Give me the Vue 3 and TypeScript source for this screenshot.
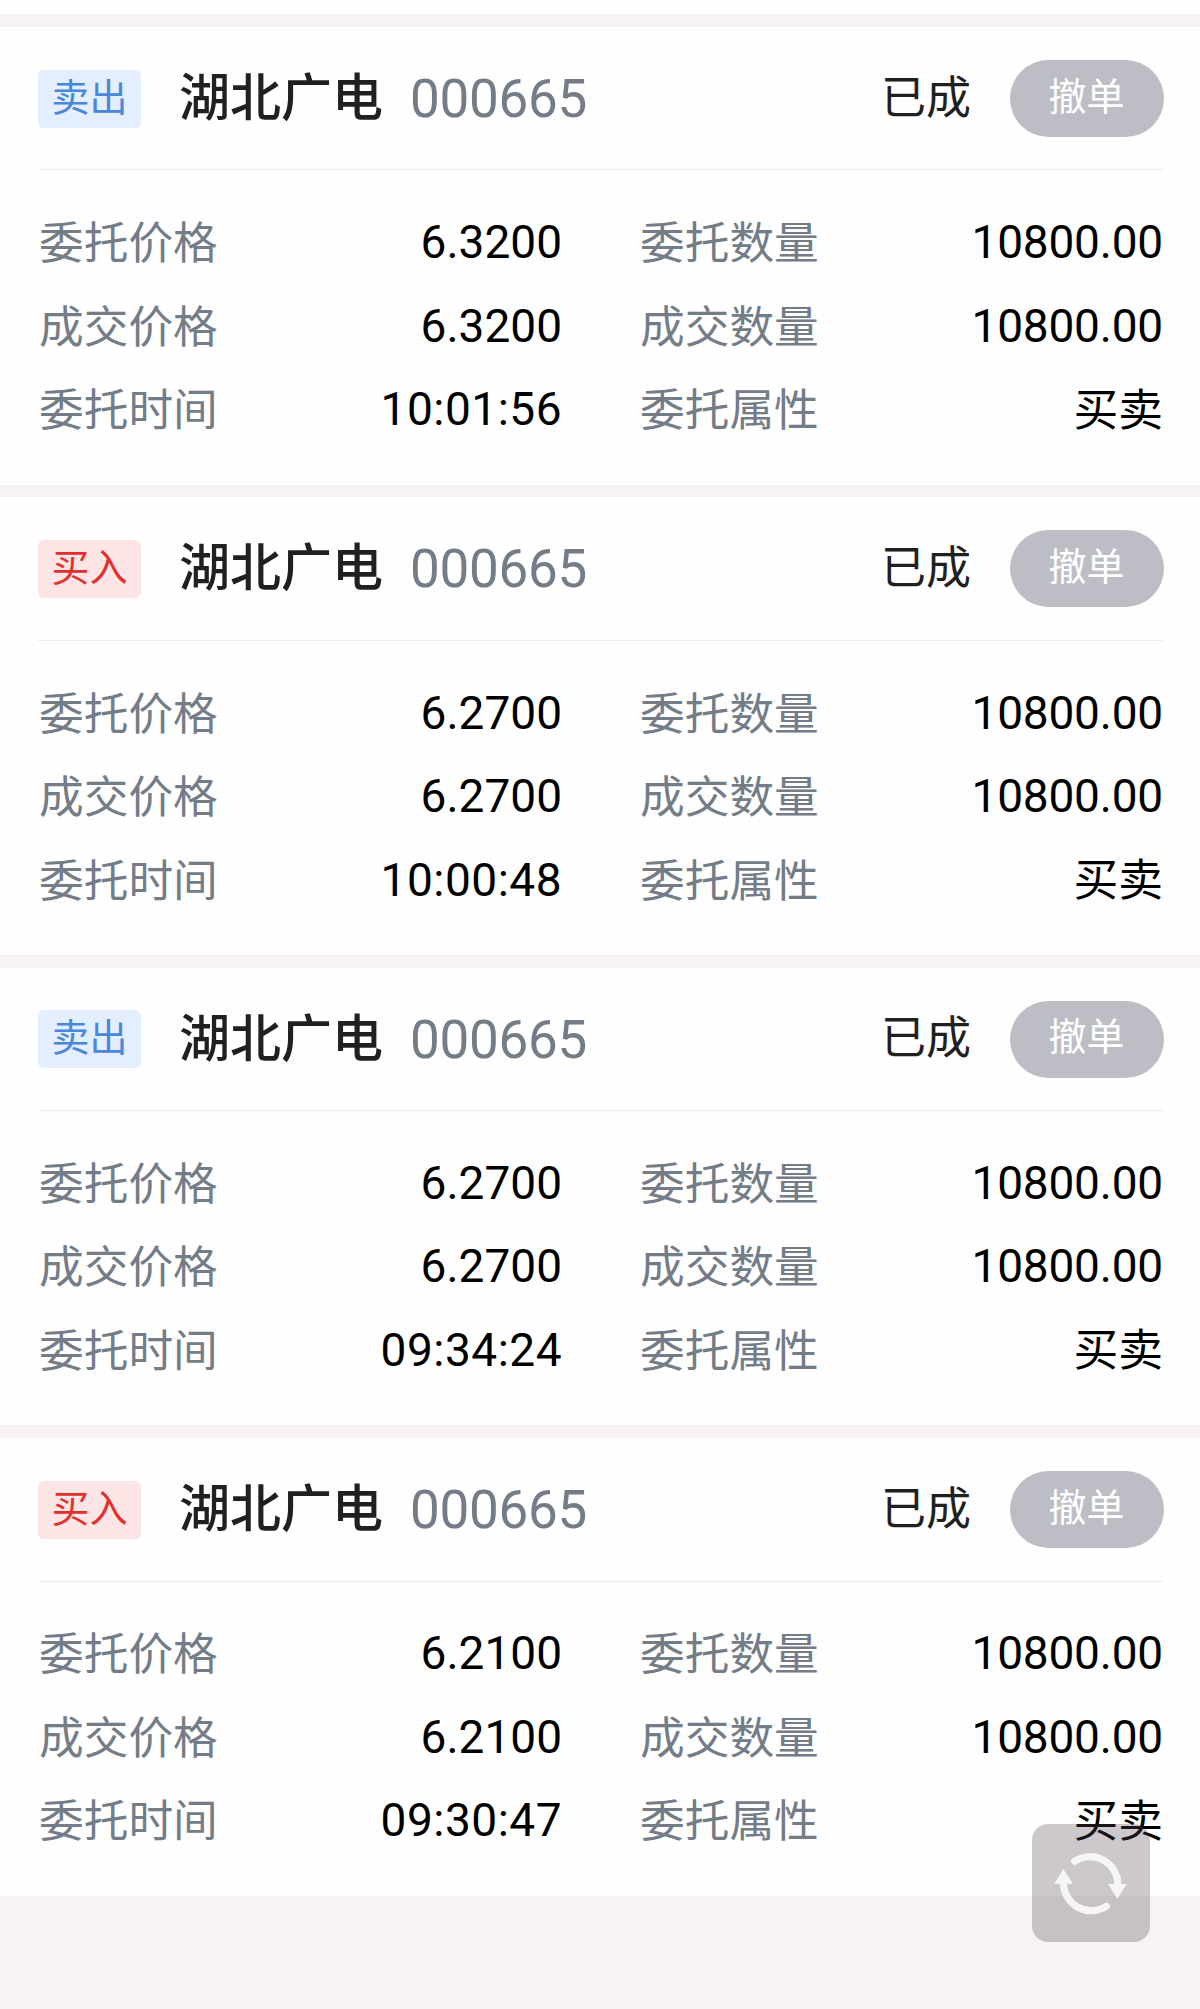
<script setup lang="ts">
interface Order {
  side: 'sell' | 'buy'
  price: string
  time: string
}

const orders: Order[] = [
  { side: 'sell', price: '6.3200', time: '10:01:56' },
  { side: 'buy', price: '6.2700', time: '10:00:48' },
  { side: 'sell', price: '6.2700', time: '09:34:24' },
  { side: 'buy', price: '6.2100', time: '09:30:47' },
]
</script>

<template>
  <main class="page">
    <div class="previous"></div>
    <section v-for="order in orders" :key="order.time" class="card">
      <header class="head">
        <span class="tag" :class="order.side">{{ order.side === 'sell' ? '卖出' : '买入' }}</span>
        <span class="name">湖北广电</span>
        <span class="code">000665</span>
        <span class="status">已成</span>
        <button class="cancel" type="button">撤单</button>
      </header>
      <div class="grid">
        <span class="label">委托价格</span><span class="value">{{ order.price }}</span>
        <span class="label second">委托数量</span><span class="value quantity">10800.00</span>
        <span class="label">成交价格</span><span class="value">{{ order.price }}</span>
        <span class="label second">成交数量</span><span class="value quantity">10800.00</span>
        <span class="label">委托时间</span><span class="value time">{{ order.time }}</span>
        <span class="label second">委托属性</span><span class="value kind">买卖</span>
      </div>
    </section>
    <button class="refresh" type="button" aria-label="刷新">
      <svg viewBox="0 0 118 118" width="118" height="118">
        <g fill="none" stroke="currentColor" stroke-width="7.2" stroke-linecap="round">
          <path d="M42.700 37.300A27.800 27.800 0 0 1 85.800 60" />
          <path d="M74.300 82.300A27.800 27.800 0 0 1 31.500 59.700" />
        </g>
        <path
          d="M76 60h18.700l-9.400 14.700zM22.300 59.700h18.700l-9.700-14.700z"
          fill="currentColor"
        />
      </svg>
    </button>
  </main>
</template>

<style>
body {
  margin: 0;
  background: #f7f2f6;
}
</style>

<style scoped>
.page {
  position: relative;
  width: 1200px;
  height: 2009px;
  overflow: hidden;
  background: #f7f2f6;
  font-family: Roboto, "Noto Sans CJK SC", sans-serif;
  color: #000;
}
.previous {
  height: 14px;
  margin-bottom: 12.77px;
  background: #fefefe;
}
.card {
  box-sizing: border-box;
  height: 457.77px;
  margin-bottom: 12.67px;
  padding: 0 37px 0 38px;
  background: #fefefe;
}
.head {
  box-sizing: border-box;
  display: flex;
  align-items: center;
  height: 143.6px;
  padding-top: 1px;
  border-bottom: 1px solid #ececee;
  white-space: nowrap;
}
.tag {
  width: 103px;
  height: 58px;
  border-radius: 6px;
  font-size: 38px;
  line-height: 56px;
  text-align: center;
}
.sell {
  background: #e3eefe;
  color: #4a86dc;
}
.buy {
  background: #fee5e5;
  color: #e23030;
}
.name {
  margin-left: 38px;
  padding-top: 1px;
  font-size: 51px;
  font-weight: 500;
  line-height: 60px;
  color: #202020;
}
.code {
  margin-left: 27px;
  padding-top: 1px;
  font-size: 53px;
  line-height: 60px;
  letter-spacing: -0.3px;
  color: #737c87;
}
.status {
  margin-left: auto;
  margin-right: 39px;
  font-size: 45px;
  line-height: 60px;
  color: #202020;
}
.cancel {
  width: 154px;
  height: 77px;
  margin: 0 -1px 0 0;
  padding: 0 1px 4px 0;
  border: 0;
  border-radius: 39px;
  background: #bdbdc6;
  color: #fff;
  font: 38px/60px Roboto, "Noto Sans CJK SC", sans-serif;
}
.grid {
  display: grid;
  grid-template-columns: 200px 324px 260px 1fr;
  grid-auto-rows: 83.5px;
  align-items: center;
  padding-top: 30px;
  font-size: 45px;
  line-height: 60px;
  white-space: nowrap;
}
.label {
  padding-top: 4px;
  padding-left: 1px;
  font-size: 44.7px;
  color: #737c87;
}
.second {
  padding-left: 78px;
}
.value {
  text-align: right;
  font-size: 46px;
}
.quantity {
  letter-spacing: -0.2px;
}
.time {
  letter-spacing: 0.5px;
}
.kind {
  padding-top: 3px;
  font-size: 44.8px;
  letter-spacing: 0;
}
.refresh {
  position: absolute;
  left: 1032px;
  top: 1824px;
  width: 118px;
  height: 118px;
  padding: 0;
  border: 0;
  border-radius: 16px;
  background: rgba(83, 70, 80, 0.29);
  color: rgb(255, 255, 255);
}
.refresh svg {
  display: block;
  opacity: 0.84;
}
</style>
